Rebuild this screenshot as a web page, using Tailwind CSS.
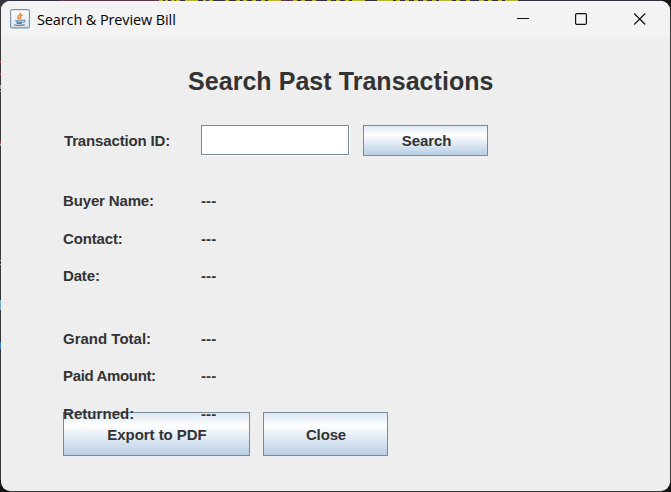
<!DOCTYPE html>
<html lang="en">
<head>
<meta charset="utf-8">
<title>Search &amp; Preview Bill</title>
<script src="https://cdn.jsdelivr.net/npm/@tailwindcss/browser@4"></script>
</head>
<body class="relative h-[492px] w-[671px] overflow-hidden bg-[#383838] p-px font-['Liberation_Sans',Arial,sans-serif] text-[15px] font-bold leading-[20px] tracking-[-0.15px] text-[#333333]">
<!-- Desktop visible around the window edges -->
<svg class="absolute left-0 top-0" width="671" height="492" shape-rendering="crispEdges">
  <path d="M0 .5H671" stroke="#35303f"/>
  <path d="M60 .5H160M281 .5H293" stroke="#563848"/>
  <path d="M159 .5h4M165 .5h3M171 .5h4M176 .5h4M185 .5h13M203 .5h3M209 .5h4M225 .5h4M236 .5h4M243 .5h4M252 .5h4M261 .5h4M268 .5h13M293 .5h4M301 .5h4M312 .5h4M327 .5h4M336 .5h4M345 .5h4M352 .5h13M377 .5h16M396 .5h4M405 .5h4M414 .5h4M423 .5h4M432 .5h4M439 .5h13M456 .5h4M466 .5h4M479 .5h5M488 .5h4M498 .5h4M505 .5h13" stroke="#b9b52e"/>
  <path d="M.5 61v2M.5 73v2M.5 141v3" stroke="#b64545"/>
  <path d="M.5 85v4M.5 91v1M.5 144v2M.5 260v1M.5 264v1" stroke="#a5a092"/>
  <path d="M.5 300v10" stroke="#6daac7"/><path d="M.5 342v7" stroke="#3f79c5"/>
  <path d="M0 480h9v12H0zM662 483h9v9h-9zM662 0h9v10h-9z" fill="#151515"/>
</svg>
<div class="relative flex h-[490px] w-[669px] flex-col overflow-hidden rounded-[9px] bg-[#eeeeee]">
  <header class="flex h-[37px] shrink-0 items-center bg-[#f3f3f3] pl-[9px] font-['Open_Sans','Noto_Sans',sans-serif] text-[14.5px] font-normal text-black">
    <svg class="-mt-px mr-[7px] shrink-0" width="20" height="20" viewBox="0 0 20 20" fill="none">
      <defs><linearGradient id="jb" x2="0" y2="1"><stop stop-color="#fff"/><stop offset="1" stop-color="#dce3e9"/></linearGradient></defs>
      <rect x=".6" y=".6" width="18.8" height="18.3" rx="1.5" fill="url(#jb)" stroke="#7893a9" stroke-width="1.1"/>
      <path d="M10.5 3.7c1 2.1-3 2.8-2.7 4.7.1.9 1 1.5 1.4 2.1M12.7 6c-2.1.9-3 1.7-2.3 2.8.4.7.2 1.2-.3 1.8" stroke="#e98735" stroke-width="1.5"/>
      <path d="M5.6 11.2c-1.2.9 6.2.9 7.7 0M6 12.9c1.6.7 5 .7 6.5 0M6.6 14.3c1.5.5 4 .5 5.3 0M13.4 11c2.4-.2 1.4 2.2-.5 2.5M4.6 15.5c-1.3 1.1 8.5 1.4 10 0" stroke="#5f86a8" stroke-width="1.1"/>
    </svg>
    <span class="flex h-[20px] items-center whitespace-nowrap tracking-[-0.12px]">Search &amp; Preview Bill</span>
    <svg class="-mt-px ml-auto mr-[24px] shrink-0" width="130" height="14" fill="none" stroke="#111" stroke-width="1.2">
      <path d="M1 6.5H13" stroke-width="1"/>
      <rect x="59.6" y="1.6" width="10.8" height="10.8" rx="1.2"/>
      <path d="M118.2 1.5l11 11M129.2 1.5l-11 11"/>
    </svg>
  </header>
  <main class="flex flex-col">
    <h1 class="mt-[28px] h-[30px] pl-[187px] text-[25px] leading-[30px] tracking-[0.05px]">Search Past Transactions</h1>
    <div class="mt-[28px] flex h-[32px] items-center pl-[63px]">
      <label for="tid" class="w-[136px] shrink-0 pt-[2px]">Transaction ID:</label>
      <div class="mr-[13px] h-[31px] w-[150px] shrink-0 border-b border-r border-white pl-px"><input id="tid" class="block h-[30px] w-[148px] border border-[#7a8a99] bg-white outline-none"></div>
      <button class="h-[31px] w-[125px] border border-[#7a8a99] bg-linear-to-b from-[#dde8f3] via-white via-30% to-[#b8cfe5] pl-[2px] pt-[2px] tracking-[-0.1px]">Search</button>
    </div>
    <dl class="relative z-10 mt-[27px] grid grid-cols-[138px_1fr] grid-rows-[38px_37px_63px_37px_38px_20px] pl-[62px] pt-[8px]">
      <dt>Buyer Name:</dt><dd class="tracking-[0.1px]">---</dd>
      <dt>Contact:</dt><dd class="tracking-[0.1px]">---</dd>
      <dt>Date:</dt><dd class="tracking-[0.1px]">---</dd>
      <dt class="tracking-[0px]">Grand Total:</dt><dd class="tracking-[0.1px]">---</dd>
      <dt class="tracking-[-0.35px]">Paid Amount:</dt><dd class="tracking-[0.1px]">---</dd>
      <dt class="tracking-[0.05px]">Returned:</dt><dd class="tracking-[0.1px]">---</dd>
    </dl>
    <div class="-mt-[12px] flex gap-[13px] pl-[62px]">
      <button class="h-[44px] w-[187px] border border-[#7a8a99] bg-linear-to-b from-[#dde8f3] via-white via-30% to-[#b8cfe5] pl-px pt-px tracking-[-0.05px]">Export to PDF</button>
      <button class="h-[44px] w-[125px] border border-[#7a8a99] bg-linear-to-b from-[#dde8f3] via-white via-30% to-[#b8cfe5] pl-px pt-px">Close</button>
    </div>
  </main>
</div>
</body>
</html>
